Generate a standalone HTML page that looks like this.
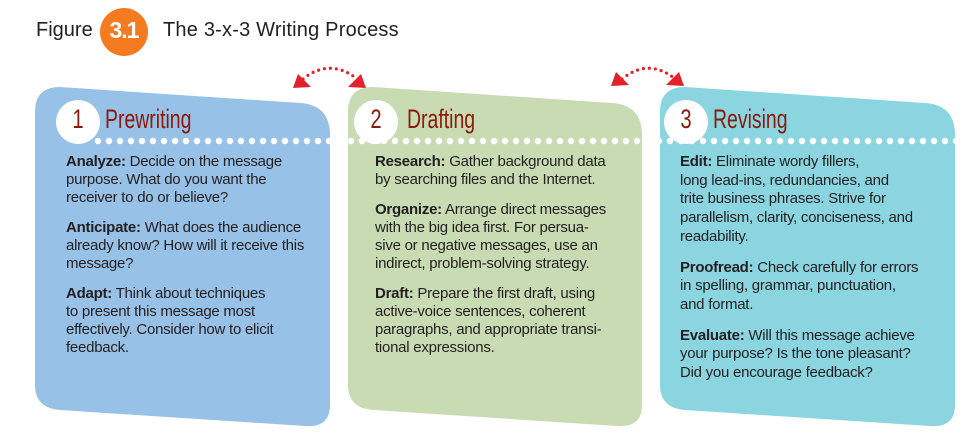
<!DOCTYPE html>
<html><head><meta charset="utf-8"><style>
body{margin:0;width:973px;height:437px;background:#fff;position:relative;overflow:hidden;font-family:"Liberation Sans",sans-serif;color:#231f20}
.t{position:absolute;font-size:15px;line-height:18px;white-space:nowrap;letter-spacing:-0.25px}
.t p{margin:0 0 12px 0}
.h{position:absolute;font-size:27px;color:#8b1a0a;transform:scaleX(0.72);transform-origin:left top;white-space:nowrap}
.n{position:absolute;font-size:27px;color:#8b1a0a;transform:scaleX(0.75);transform-origin:center top;width:44px;text-align:center}
</style></head><body>
<svg width="973" height="437" style="position:absolute;left:0;top:0">
<path d="M35,112 Q35,87 60,87 L300,103 Q330,105 330,135 L330,405 Q330,428 305,426 L60,410 Q35,408 35,385 Z" fill="#97c1e7"/>
<path d="M348,112 Q348,87 373,87 L612,103 Q642,105 642,135 L642,405 Q642,428 617,426 L373,410 Q348,408 348,385 Z" fill="#c9dbb3"/>
<path d="M660,112 Q660,87 685,87 L925,103 Q955,105 955,135 L955,405 Q955,428 930,426 L685,410 Q660,408 660,385 Z" fill="#8ad5e0"/>
<circle cx="78" cy="122" r="22" fill="#fff"/>
<circle cx="376" cy="122" r="22" fill="#fff"/>
<circle cx="686" cy="122" r="22" fill="#fff"/>
<line x1="98" y1="141" x2="960" y2="141" stroke="#fff" stroke-width="6.5" stroke-dasharray="0 11" stroke-linecap="round"/>
<path d="M303,79 Q329,58 356,78" fill="none" stroke="#e3212b" stroke-width="3.2" stroke-dasharray="0 6" stroke-linecap="round"/>
<polygon points="293,88 311,87 298,74" fill="#e3212b"/>
<polygon points="366,88 348,87 361,74" fill="#e3212b"/>
<path d="M622,79 Q648,58 674,78" fill="none" stroke="#e3212b" stroke-width="3.2" stroke-dasharray="0 6" stroke-linecap="round"/>
<polygon points="611,86 629,85 616,72" fill="#e3212b"/>
<polygon points="684,86 666,85 679,72" fill="#e3212b"/>
<circle cx="124" cy="32" r="24" fill="#f47b20"/>
</svg>
<div style="position:absolute;left:36px;top:19px;font-size:20px">Figure</div>
<div style="position:absolute;left:100px;top:17px;width:48px;text-align:center;font-size:23px;font-weight:bold;color:#fff;letter-spacing:-1px">3.1</div>
<div style="position:absolute;left:163px;top:19px;font-size:20px;white-space:nowrap;letter-spacing:0.2px">The 3-x-3 Writing Process</div>
<div class="n" style="left:56px;top:104px">1</div><div class="h" style="left:105px;top:104px">Prewriting</div>
<div class="n" style="left:354px;top:104px">2</div><div class="h" style="left:407px;top:104px">Drafting</div>
<div class="n" style="left:664px;top:104px">3</div><div class="h" style="left:713px;top:104px">Revising</div>
<div class="t" style="left:66px;top:153px">
<p><b>Analyze:</b> Decide on the message<br>purpose. What do you want the<br>receiver to do or believe?</p>
<p><b>Anticipate:</b> What does the audience<br>already know? How will it receive this<br>message?</p>
<p><b>Adapt:</b> Think about techniques<br>to present this message most<br>effectively. Consider how to elicit<br>feedback.</p></div>
<div class="t" style="left:375px;top:153px">
<p><b>Research:</b> Gather background data<br>by searching files and the Internet.</p>
<p><b>Organize:</b> Arrange direct messages<br>with the big idea first. For persua-<br>sive or negative messages, use an<br>indirect, problem-solving strategy.</p>
<p><b>Draft:</b> Prepare the first draft, using<br>active-voice sentences, coherent<br>paragraphs, and appropriate transi-<br>tional expressions.</p></div>
<div class="t" style="left:680px;top:153px;line-height:18.7px">
<p><b>Edit:</b> Eliminate wordy fillers,<br>long lead-ins, redundancies, and<br>trite business phrases. Strive for<br>parallelism, clarity, conciseness, and<br>readability.</p>
<p><b>Proofread:</b> Check carefully for errors<br>in spelling, grammar, punctuation,<br>and format.</p>
<p><b>Evaluate:</b> Will this message achieve<br>your purpose? Is the tone pleasant?<br>Did you encourage feedback?</p></div>
</body></html>
